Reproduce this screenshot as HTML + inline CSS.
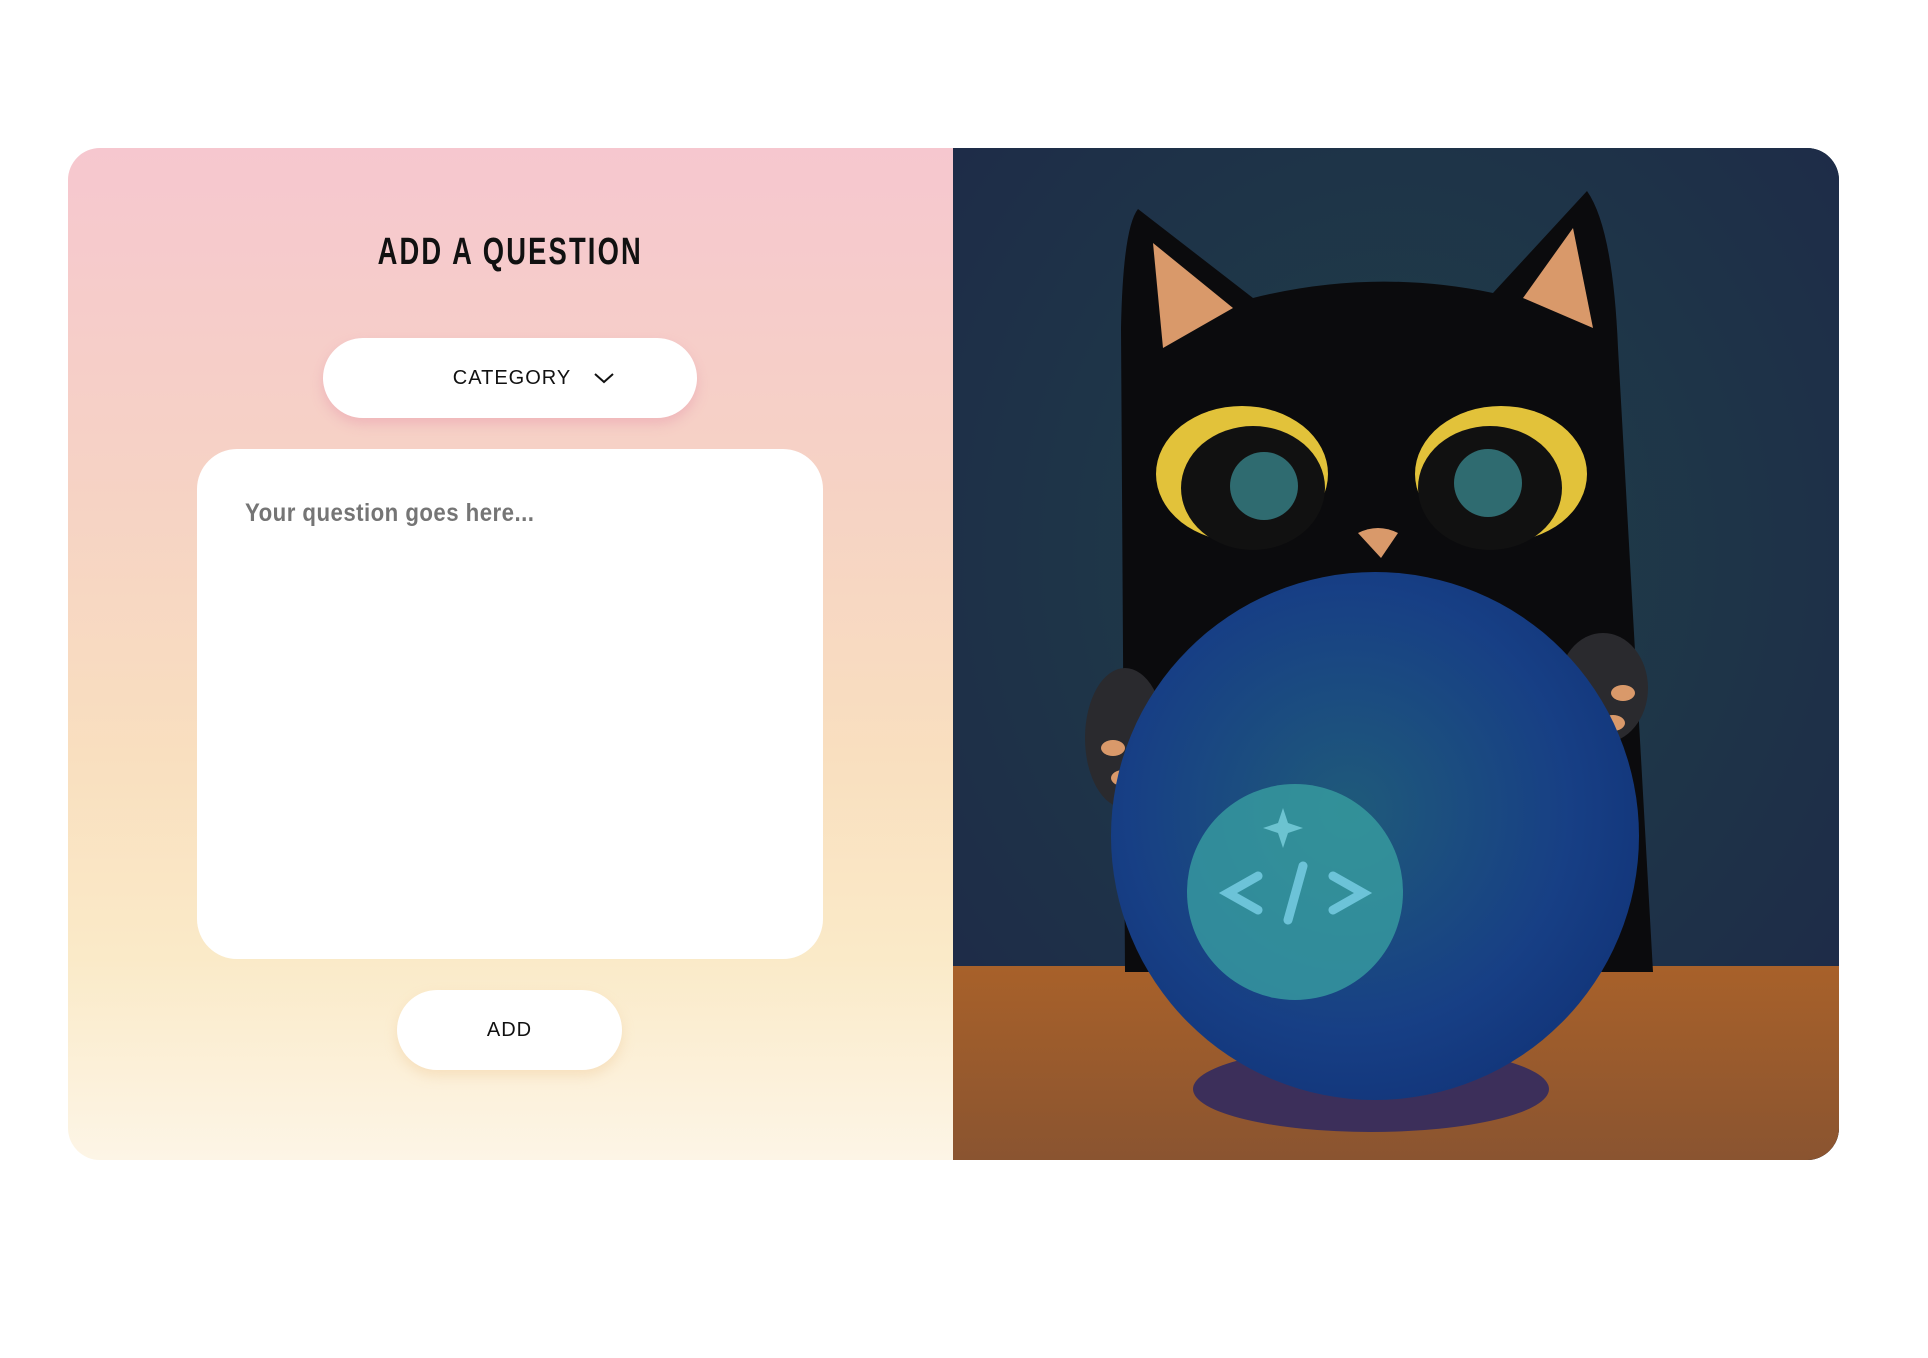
<!DOCTYPE html>
<html><head><meta charset="utf-8"><style>
html,body{margin:0;padding:0;background:#fff;width:1928px;height:1358px;overflow:hidden}
.card{position:absolute;left:68px;top:148px;width:1771px;height:1012px;border-radius:32px;overflow:hidden}
.left{position:absolute;left:0;top:0;width:885px;height:1012px;background:linear-gradient(180deg,#f6c7cf 0%,#f6d3c4 35%,#f9dfbf 60%,#faeac8 80%,#fdf5e6 100%)}
.title{position:absolute;left:0;width:885px;top:85px;text-align:center;font-family:"Liberation Sans Narrow","Liberation Sans",sans-serif;font-size:38px;font-weight:bold;letter-spacing:3px;color:#111;line-height:1}
.title span{display:inline-block;transform:scaleX(.72)}
.cat{position:absolute;left:255px;top:190px;width:374px;height:80px;background:#fff;border-radius:40px;box-shadow:0 6px 12px rgba(230,150,170,.45);font-family:"Liberation Sans",sans-serif;font-size:20px;letter-spacing:1px;color:#111;display:flex;align-items:center;justify-content:center;padding-left:48px;box-sizing:border-box}
.ta{position:absolute;left:129px;top:301px;width:626px;height:510px;background:#fff;border-radius:40px}
.ph{position:absolute;left:48px;top:50px;font-family:"Liberation Sans Narrow","Liberation Sans",sans-serif;font-size:25px;font-weight:bold;color:#757575;letter-spacing:.5px;transform:scaleX(.89);transform-origin:left center;white-space:nowrap}
.add{position:absolute;left:329px;top:842px;width:225px;height:80px;background:#fff;border-radius:40px;box-shadow:0 6px 12px rgba(240,200,150,.4);font-family:"Liberation Sans",sans-serif;font-size:20px;letter-spacing:1px;color:#111;display:flex;align-items:center;justify-content:center}
.right{position:absolute;left:885px;top:0;width:886px;height:1012px;background:#1c3340}
</style></head><body>
<div class="card">
 <div class="left">
  <div class="title"><span>ADD A QUESTION</span></div>
  <div class="cat">CATEGORY<svg width="22" height="14" style="margin-left:22px" viewBox="0 0 22 14"><path d="M2 3 L11 11 L20 3" fill="none" stroke="#111" stroke-width="2"/></svg></div>
  <div class="ta"><div class="ph">Your question goes here...</div></div>
  <div class="add">ADD</div>
 </div>
 <div class="right">
  <svg width="886" height="1012" viewBox="0 0 886 1012">
   <defs>
    <radialGradient id="bg" cx="50%" cy="40%" r="70%"><stop offset="0" stop-color="#1f4048"/><stop offset="1" stop-color="#1e2a48"/></radialGradient>
    <radialGradient id="ball" cx="45%" cy="45%" r="60%"><stop offset="0" stop-color="#1f5a7a"/><stop offset=".7" stop-color="#173f85"/><stop offset="1" stop-color="#12357a"/></radialGradient>
    <linearGradient id="tb" x1="0" y1="0" x2="0" y2="1"><stop offset="0" stop-color="#a8612a"/><stop offset="1" stop-color="#8a5430"/></linearGradient>
   </defs>
   <rect width="886" height="1012" fill="url(#bg)"/>
   <rect y="818" width="886" height="194" fill="url(#tb)"/>
   <path d="M172 824 L168 180 Q170 80 185 61 L300 150 Q420 120 540 145 L634 43 Q660 80 665 200 L700 824 Z" fill="#0b0b0d"/>
   <path d="M200 95 L280 160 L210 200 Z" fill="#d9996a"/>
   <path d="M620 80 L570 150 L640 180 Z" fill="#d9996a"/>
   <ellipse cx="289" cy="326" rx="86" ry="68" fill="#e2c23a"/>
   <ellipse cx="300" cy="340" rx="72" ry="62" fill="#111"/>
   <ellipse cx="548" cy="326" rx="86" ry="68" fill="#e2c23a"/>
   <ellipse cx="537" cy="340" rx="72" ry="62" fill="#111"/>
   <circle cx="311" cy="338" r="34" fill="#2f6b70"/>
   <circle cx="535" cy="335" r="34" fill="#2f6b70"/>
   <path d="M405 385 Q425 375 445 385 L428 410 Z" fill="#d9996a"/>
   <ellipse cx="172" cy="590" rx="40" ry="70" fill="#2a2a2e"/>
   <ellipse cx="160" cy="600" rx="12" ry="8" fill="#d9996a"/>
   <ellipse cx="170" cy="630" rx="12" ry="8" fill="#d9996a"/>
   <ellipse cx="650" cy="540" rx="45" ry="55" fill="#2a2a2e"/>
   <ellipse cx="670" cy="545" rx="12" ry="8" fill="#d9996a"/>
   <ellipse cx="660" cy="575" rx="12" ry="8" fill="#d9996a"/>
   <ellipse cx="418" cy="941" rx="178" ry="43" fill="#3c2f5a"/>
   <circle cx="422" cy="688" r="264" fill="url(#ball)"/>
   <circle cx="342" cy="744" r="108" fill="#3aa3a3" opacity=".75"/>
   <path d="M305 728 L275 745 L305 762 M380 728 L410 745 L380 762 M350 718 L335 772" fill="none" stroke="#6cc3d8" stroke-width="9" stroke-linecap="round"/>
   <path d="M330 660 l5 15 15 5 -15 5 -5 15 -5 -15 -15 -5 15 -5z" fill="#6cc3d0"/>
  </svg>
 </div>
</div>
</body></html>
